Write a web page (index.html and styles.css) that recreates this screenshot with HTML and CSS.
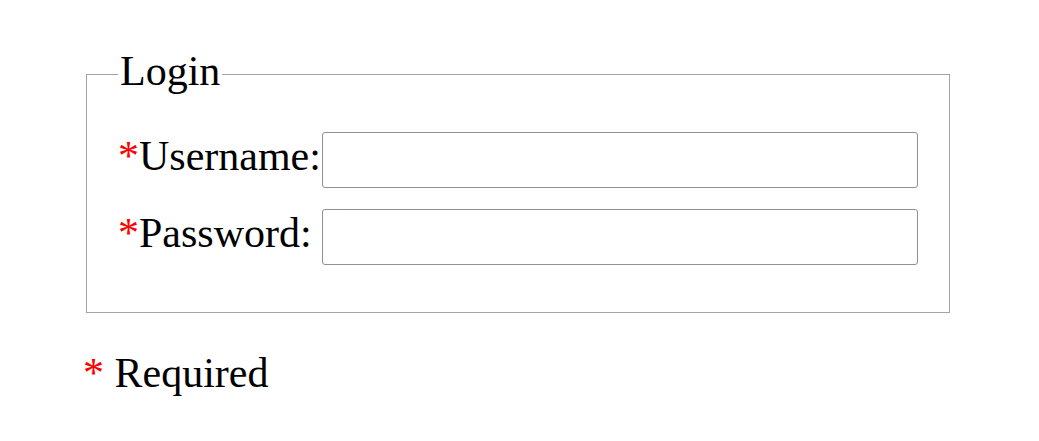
FILE: index.html
```html
<!DOCTYPE html>
<html lang="en">
<head>
    <meta charset="UTF-8">
    <meta name="viewport" content="width=device-width, initial-scale=1.0">
    <title>Login</title>
    <link rel="stylesheet" href="styles.css">
</head>
<body>
    <form class="login-form">
        <fieldset class="login-box">
            <legend>Login</legend>
            <div class="fields">
                <label for="username"><span class="req">*</span>Username:</label>
                <input type="text" id="username" name="username">
                <label for="password"><span class="req">*</span>Password:</label>
                <input type="password" id="password" name="password">
            </div>
        </fieldset>
        <p class="note"><span class="req">*</span> Required</p>
    </form>
</body>
</html>
```

FILE: styles.css
```css
* {
    box-sizing: border-box;
}

body {
    margin: 0;
    font-family: 'Liberation Serif', 'Times New Roman', serif;
    font-size: 42px;
    line-height: 48px;
    color: #000;
    background: #fff;
}

.login-form {
    padding: 47px 89px 0 86px;
}

.login-box {
    margin: 0;
    padding: 31px 31px 47px 31px;
    border: 1px solid #a3a3a3;
}

.login-box legend {
    padding: 0 2px 6px;
    line-height: 48px;
}

.fields {
    display: grid;
    grid-template-columns: auto 1fr;
    column-gap: 1px;
    row-gap: 21px;
    align-items: start;
}

.fields input {
    width: 100%;
    height: 56px;
    margin: 0;
    border: 1px solid #8f8f9d;
    border-radius: 3px;
    font-size: 20px;
}

.req {
    color: #f00;
}

.note {
    margin: 36px 0 0 -3px;
}
```
